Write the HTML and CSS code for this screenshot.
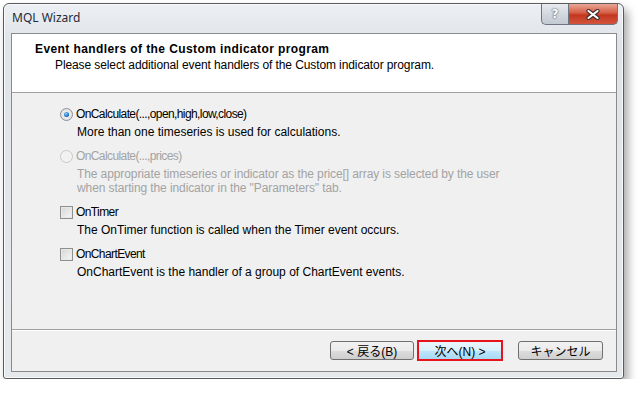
FILE: index.html
```html
<!DOCTYPE html>
<html lang="ja">
<head>
    <meta charset="UTF-8">
    <title>MQL Wizard</title>
    <link rel="stylesheet" href="styles.css">
</head>
<body>
    <div class="window">
        <div class="titlebar">
            <span class="title">MQL Wizard</span>
            <div class="caption-buttons">
                <span class="btn-help">?</span>
                <span class="btn-close">
                    <svg width="16" height="11" viewBox="0 0 16 11">
                        <path d="M3.5 2 L12.5 9 M12.5 2 L3.5 9" stroke="#3e2b2b" stroke-width="4.2" stroke-linecap="round"/>
                        <path d="M3.5 2 L12.5 9 M12.5 2 L3.5 9" stroke="#fff" stroke-width="2.2" stroke-linecap="round"/>
                    </svg>
                </span>
            </div>
        </div>

        <div class="client">
            <div class="header">
                <div class="header-title">Event handlers of the Custom indicator program</div>
                <div class="header-sub">Please select additional event handlers of the Custom indicator program.</div>
            </div>

            <div class="options">
                <div class="option">
                    <label class="choice"><span class="radio checked"></span>OnCalculate(...,open,high,low,close)</label>
                    <p class="desc">More than one timeseries is used for calculations.</p>
                </div>
                <div class="option disabled">
                    <label class="choice"><span class="radio"></span>OnCalculate(...,prices)</label>
                    <p class="desc two-line">The appropriate timeseries or indicator as the price[] array is selected by the user<br>when starting the indicator in the "Parameters" tab.</p>
                </div>
                <div class="option">
                    <label class="choice"><span class="check"></span>OnTimer</label>
                    <p class="desc">The OnTimer function is called when the Timer event occurs.</p>
                </div>
                <div class="option">
                    <label class="choice"><span class="check"></span>OnChartEvent</label>
                    <p class="desc">OnChartEvent is the handler of a group of ChartEvent events.</p>
                </div>
            </div>

            <div class="footer">
                <button class="button">&lt; 戻る(B)</button>
                <button class="button default">次へ(N) &gt;</button>
                <button class="button cancel">キャンセル</button>
            </div>
        </div>
    </div>
</body>
</html>
```

FILE: styles.css
```css
body {
    margin: 0;
    background-color: #fff;
    font-family: "Liberation Sans", "Noto Sans CJK JP", sans-serif;
    font-size: 12px;
    color: #000;
}

.window {
    margin: 3px 0 0 3px;
    width: 606px;
    height: 374px;
    padding: 0 6px 0 7px;
    box-sizing: content-box;
    background: linear-gradient(to bottom, #eceff3, #dfe4ea 40px, #e6e9ec);
    border: 1px solid #5b5b5b;
    border-radius: 6px 6px 3px 3px;
    box-shadow: 4px 6px 10px rgba(0, 0, 0, 0.35), inset 0 0 0 1px #f7f9fb;
    display: flex;
    flex-direction: column;
}

.titlebar {
    height: 29px;
    flex-shrink: 0;
    display: flex;
    justify-content: space-between;
    align-items: flex-start;
}

.title {
    margin: 5px 0 0 1px;
    font-family: "Noto Sans", "Liberation Sans", sans-serif;
    font-size: 12px;
    color: #1e2a3a;
}

.caption-buttons {
    display: flex;
    margin-right: -1px;
}

.btn-help,
.btn-close {
    height: 20px;
    border: 1px solid #6c7580;
    border-top: none;
    display: flex;
    align-items: center;
    justify-content: center;
}

.btn-help {
    width: 26px;
    border-radius: 0 0 0 5px;
    border-right: none;
    background: linear-gradient(to bottom, #e8ebf0, #d3d8df 50%, #c3cad2);
    font-family: "DejaVu Sans", sans-serif;
    font-size: 12px;
    font-weight: bold;
    color: #fff;
    text-shadow: 0 0 2px #4e5866, 0 0 1px #4e5866;
}

.btn-close {
    width: 48px;
    border-radius: 0 0 5px 0;
    background: linear-gradient(to bottom, #e9a796, #d45c44 45%, #c3361e 55%, #d3553d);
}

.client {
    height: 337px;
    flex-shrink: 0;
    background-color: #f0f0f0;
    border: 1px solid #8a8a8a;
    display: flex;
    flex-direction: column;
}

.header {
    height: 59px;
    flex-shrink: 0;
    background-color: #fff;
    border-bottom: 1px solid #a0a0a0;
    padding: 7px 0 0 23px;
    box-sizing: border-box;
}

.header-title {
    font-weight: bold;
    line-height: 16px;
    letter-spacing: 0.4px;
}

.header-sub {
    padding-left: 20px;
    line-height: 16px;
    letter-spacing: -0.1px;
}

.options {
    flex: 1;
    padding: 13px 0 0 48px;
}

.option {
    margin-bottom: 10px;
}

.option.disabled {
    margin-bottom: 9px;
}

.choice {
    display: flex;
    align-items: center;
    height: 16px;
    letter-spacing: -0.6px;
}

.desc {
    margin: 4px 0 0 17px;
    line-height: 12px;
}

.desc.two-line {
    line-height: 13.5px;
    letter-spacing: -0.1px;
}

.disabled {
    color: #a3a3a3;
}

.radio {
    width: 11px;
    height: 11px;
    border-radius: 50%;
    border: 1px solid #8a8f96;
    background: radial-gradient(circle, #f4f4f4, #dcdcdc);
    margin-right: 3px;
    position: relative;
    flex-shrink: 0;
}

.radio.checked::after {
    content: "";
    position: absolute;
    left: 3px;
    top: 3px;
    width: 5px;
    height: 5px;
    border-radius: 50%;
    background: radial-gradient(circle at 40% 35%, #8fd4ff, #1d6fc2 60%, #0d4a8a);
}

.disabled .radio {
    border-color: #c8c8c8;
    background: #f2f2f2;
}

.check {
    width: 11px;
    height: 11px;
    border: 1px solid #8e8f8f;
    background: linear-gradient(135deg, #d6d6d6, #f6f6f6);
    box-shadow: inset 0 0 0 1px #e8e8e8;
    margin-right: 3px;
    flex-shrink: 0;
}

.footer {
    height: 42px;
    flex-shrink: 0;
    box-sizing: border-box;
    border-top: 1px solid #a0a0a0;
    box-shadow: inset 0 1px 0 #fff;
    display: flex;
    justify-content: flex-end;
    align-items: center;
    padding: 0 13px 0 0;
    gap: 3px;
}

.button {
    width: 84px;
    height: 19px;
    padding: 0;
    border: 1px solid #707070;
    border-radius: 3px;
    background: linear-gradient(to bottom, #f2f2f2, #ebebeb 50%, #dddddd 51%, #cfcfcf);
    font-family: "Liberation Sans", "Noto Sans CJK JP", sans-serif;
    font-size: 12px;
    color: #000;
}

.button.default {
    border: 2px solid #e8141c;
    border-radius: 0;
    height: 21px;
    width: 86px;
    background: linear-gradient(to bottom, #eaf6fd, #d9f0fc 50%, #bee6fd 51%, #a7d9f5);
}

.button.cancel {
    margin-left: 12px;
    width: 85px;
}
```
